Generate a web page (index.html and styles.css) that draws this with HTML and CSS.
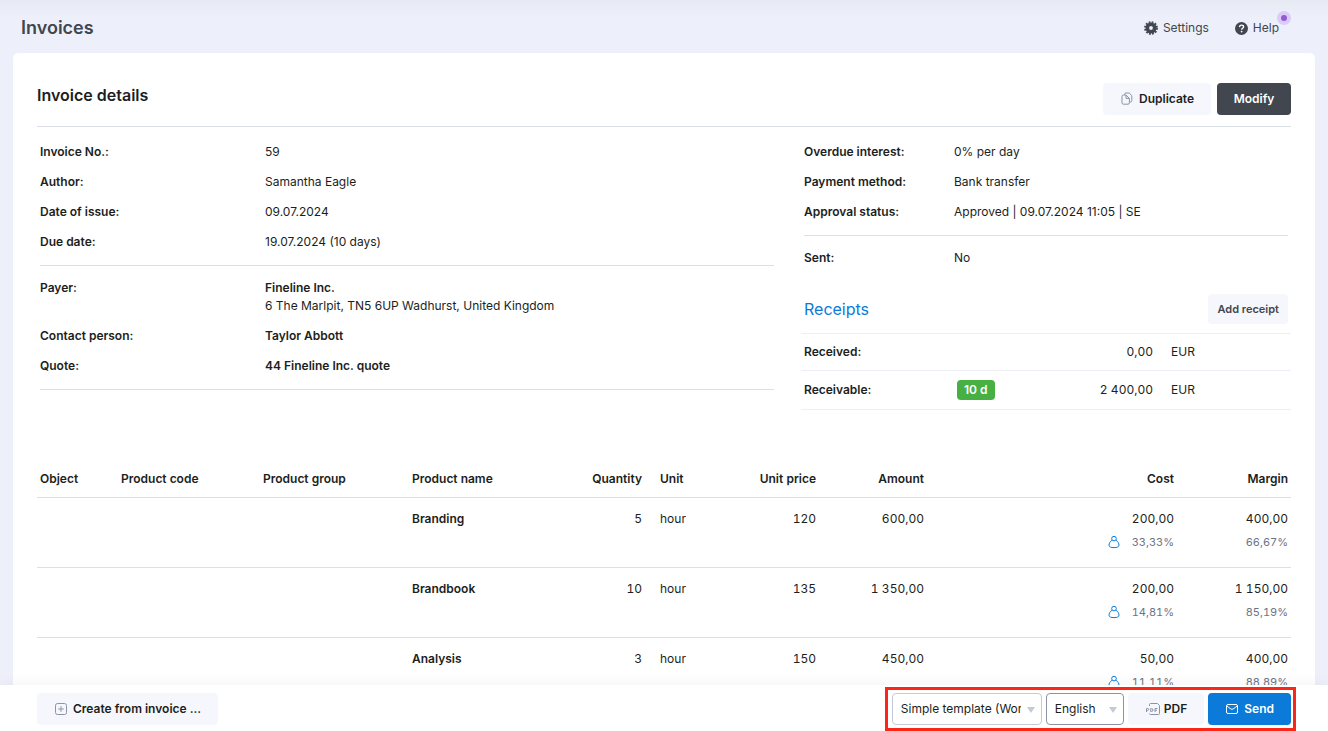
FILE: index.html
```html
<!DOCTYPE html>
<html lang="en">
<head>
    <meta charset="UTF-8">
    <meta name="viewport" content="width=device-width, initial-scale=1.0">
    <title>Invoices</title>
    <link rel="stylesheet" href="styles.css">
</head>
<body>
    <header class="page-header">
        <h1>Invoices</h1>
        <nav class="header-links">
            <a href="#">
                <svg width="14" height="14" viewBox="0 0 14 14">
                    <circle cx="7" cy="7" r="3.7" fill="none" stroke="currentColor" stroke-width="3.6"/>
                    <circle cx="7" cy="7" r="6" fill="none" stroke="currentColor" stroke-width="1.8" stroke-dasharray="1.8 1.34"/>
                </svg>
                Settings
            </a>
            <a href="#" class="help-link">
                <svg width="13" height="13" viewBox="0 0 13 13">
                    <circle cx="6.5" cy="6.5" r="6.5" fill="currentColor"/>
                    <path d="M4.5 5.1C4.6 3.8 5.4 3.1 6.5 3.1C7.7 3.1 8.6 3.8 8.6 4.8C8.6 6.2 6.6 6.2 6.6 7.7" fill="none" stroke="#fff" stroke-width="1.4"/>
                    <circle cx="6.6" cy="9.6" r="0.9" fill="#fff"/>
                </svg>
                Help
                <span class="help-dot"></span>
            </a>
        </nav>
    </header>

    <main class="card">
        <div class="card-header">
            <h2>Invoice details</h2>
            <div class="card-actions">
                <button type="button" class="btn btn-duplicate">
                    <svg width="12" height="13" viewBox="0 0 12 13" fill="none" stroke="#8a94a6">
                        <path d="M3.5 2.5Q3.5 1 5 1H8.2L10.8 3.6V8.5Q10.8 10 9.3 10H8.6"/>
                        <path d="M5 3H2.5Q1 3 1 4.4V10.8Q1 12.2 2.5 12.2H7Q8.4 12.2 8.4 10.8V6.4L5 3V6.4H8.4"/>
                    </svg>
                    Duplicate
                </button>
                <button type="button" class="btn btn-dark">Modify</button>
            </div>
        </div>

        <div class="details">
            <div class="details-left">
                <dl class="info">
                    <dt>Invoice No.:</dt><dd>59</dd>
                    <dt>Author:</dt><dd>Samantha Eagle</dd>
                    <dt>Date of issue:</dt><dd>09.07.2024</dd>
                    <dt>Due date:</dt><dd>19.07.2024 (10 days)</dd>
                </dl>
                <dl class="info">
                    <dt>Payer:</dt><dd><strong>Fineline Inc.</strong><br>6 The Marlpit, TN5 6UP Wadhurst, United Kingdom</dd>
                    <dt>Contact person:</dt><dd><strong>Taylor Abbott</strong></dd>
                    <dt>Quote:</dt><dd><strong>44 Fineline Inc. quote</strong></dd>
                </dl>
            </div>
            <div class="details-right">
                <dl class="info">
                    <dt>Overdue interest:</dt><dd>0% per day</dd>
                    <dt>Payment method:</dt><dd>Bank transfer</dd>
                    <dt>Approval status:</dt><dd>Approved | 09.07.2024 11:05 | SE</dd>
                </dl>
                <dl class="info info-last">
                    <dt>Sent:</dt><dd>No</dd>
                </dl>
                <div class="receipts-header">
                    <h3>Receipts</h3>
                    <button type="button" class="btn btn-small">Add receipt</button>
                </div>
                <table class="receipts">
                    <tr>
                        <th scope="row">Received:</th>
                        <td></td>
                        <td class="num">0,00</td>
                        <td class="currency">EUR</td>
                    </tr>
                    <tr>
                        <th scope="row">Receivable:</th>
                        <td><span class="badge">10 d</span></td>
                        <td class="num">2 400,00</td>
                        <td class="currency">EUR</td>
                    </tr>
                </table>
            </div>
        </div>

        <table class="products">
            <thead>
                <tr>
                    <th class="col-object">Object</th>
                    <th class="col-code">Product code</th>
                    <th class="col-group">Product group</th>
                    <th>Product name</th>
                    <th class="col-quantity num">Quantity</th>
                    <th class="col-unit">Unit</th>
                    <th class="col-price num">Unit price</th>
                    <th class="col-amount num">Amount</th>
                    <th class="col-cost num">Cost</th>
                    <th class="col-margin num">Margin</th>
                </tr>
            </thead>
            <tbody>
                <tr>
                    <td></td>
                    <td></td>
                    <td></td>
                    <td><strong>Branding</strong></td>
                    <td class="num">5</td>
                    <td class="col-unit">hour</td>
                    <td class="num">120</td>
                    <td class="num">600,00</td>
                    <td class="num">200,00
                        <div class="percent">
                            <svg class="person" width="12" height="14" viewBox="0 0 12 14"><circle cx="6" cy="3.6" r="2.3"/><path d="M3.9 5.3C2 6.6 1 8.5 1 10.2C1 12 3 12.6 6 12.6S11 12 11 10.2C11 8.5 10 6.6 8.1 5.3"/></svg>
                            33,33%
                        </div>
                    </td>
                    <td class="num">400,00<div class="percent">66,67%</div></td>
                </tr>
                <tr>
                    <td></td>
                    <td></td>
                    <td></td>
                    <td><strong>Brandbook</strong></td>
                    <td class="num">10</td>
                    <td class="col-unit">hour</td>
                    <td class="num">135</td>
                    <td class="num">1 350,00</td>
                    <td class="num">200,00
                        <div class="percent">
                            <svg class="person" width="12" height="14" viewBox="0 0 12 14"><circle cx="6" cy="3.6" r="2.3"/><path d="M3.9 5.3C2 6.6 1 8.5 1 10.2C1 12 3 12.6 6 12.6S11 12 11 10.2C11 8.5 10 6.6 8.1 5.3"/></svg>
                            14,81%
                        </div>
                    </td>
                    <td class="num">1 150,00<div class="percent">85,19%</div></td>
                </tr>
                <tr>
                    <td></td>
                    <td></td>
                    <td></td>
                    <td><strong>Analysis</strong></td>
                    <td class="num">3</td>
                    <td class="col-unit">hour</td>
                    <td class="num">150</td>
                    <td class="num">450,00</td>
                    <td class="num">50,00
                        <div class="percent">
                            <svg class="person" width="12" height="14" viewBox="0 0 12 14"><circle cx="6" cy="3.6" r="2.3"/><path d="M3.9 5.3C2 6.6 1 8.5 1 10.2C1 12 3 12.6 6 12.6S11 12 11 10.2C11 8.5 10 6.6 8.1 5.3"/></svg>
                            11,11%
                        </div>
                    </td>
                    <td class="num">400,00<div class="percent">88,89%</div></td>
                </tr>
            </tbody>
        </table>
    </main>

    <footer class="toolbar">
        <button type="button" class="btn btn-create">
            <svg width="12" height="12" viewBox="0 0 12 12" fill="none" stroke="#8a94a6">
                <rect x="0.5" y="0.5" width="11" height="11" rx="2"/>
                <path d="M6 3.2V8.8M3.2 6H8.8"/>
            </svg>
            Create from invoice ...
        </button>
        <div class="send-group">
            <div class="select-wrap select-template">
                <select aria-label="Template">
                    <option>Simple template (Word)</option>
                </select>
            </div>
            <div class="select-wrap select-language">
                <select aria-label="Language">
                    <option>English</option>
                </select>
            </div>
            <button type="button" class="btn btn-pdf">
                <svg width="14" height="12" viewBox="0 0 14 12" fill="none" stroke="#8a94a6">
                    <path d="M3.5 3V1.5Q3.5 0.5 4.5 0.5H11.5L13.5 2.5V10.5Q13.5 11.5 12.5 11.5H4.5Q3.5 11.5 3.5 10.5"/>
                    <path d="M0.5 9V5.5H1.6Q2.7 5.5 2.7 6.4T1.6 7.4H0.5M4.7 5.5V8.5H5.4Q7 8.5 7 7T5.4 5.5ZM9 9V5.5H11.4M9 7.3H11"/>
                </svg>
                PDF
            </button>
            <button type="submit" class="btn btn-send">
                <svg width="12" height="10" viewBox="0 0 12 10" fill="none" stroke="#fff">
                    <rect x="0.5" y="0.5" width="11" height="9" rx="1.5"/>
                    <path d="M1 2.2L5 5Q6 5.7 7 5L11 2.2"/>
                </svg>
                Send
            </button>
        </div>
    </footer>
</body>
</html>
```
FILE: styles.css
```css
* {
    box-sizing: border-box;
}

body {
    font-family: Inter, "Liberation Sans", sans-serif;
    font-size: 12px;
    line-height: 18px;
    color: #1c1e21;
    background: linear-gradient(#e7eaf3, #edf0fa 18px);
    margin: 0;
    height: 100vh;
    display: flex;
    flex-direction: column;
}

h1, h2, h3, dl, dd {
    margin: 0;
}

strong, dt, th {
    font-weight: 600;
}

.page-header {
    flex: none;
    display: flex;
    justify-content: space-between;
    align-items: center;
    padding: 16px 49px 13px 21px;
}

.page-header h1 {
    font-size: 18px;
    line-height: 24px;
    font-weight: 600;
    color: #42464e;
}

.header-links {
    display: flex;
    gap: 26px;
}

.header-links a {
    display: flex;
    align-items: center;
    gap: 5px;
    color: #42464e;
    text-decoration: none;
}

.help-link {
    position: relative;
}

.help-dot {
    position: absolute;
    top: -8px;
    right: -12px;
    width: 14px;
    height: 14px;
    border: 4px solid #dccbf6;
    border-radius: 50%;
    background-color: #8f5bd6;
}

.card {
    flex: 1;
    min-height: 0;
    overflow: hidden;
    margin: 0 13px;
    padding: 30px 24px 0;
    background-color: #fff;
    border-radius: 5px 5px 0 0;
}

.card-header {
    display: flex;
    justify-content: space-between;
    padding-bottom: 11px;
    border-bottom: 1px solid #dbdfe8;
}

.card-header h2 {
    font-size: 16px;
    line-height: 24px;
    font-weight: 600;
}

.card-actions {
    display: flex;
    gap: 6px;
}

.btn {
    display: flex;
    align-items: center;
    justify-content: center;
    gap: 6px;
    height: 32px;
    padding: 0 17px 1px 18px;
    border: none;
    border-radius: 4px;
    background-color: #f6f7fc;
    color: #1c1e21;
    font-family: inherit;
    font-size: 12px;
    font-weight: 600;
    cursor: pointer;
}

.btn-dark {
    min-width: 74px;
    padding: 0 16px 1px;
    background-color: #42464e;
    color: #fff;
}

.btn-small {
    height: 30px;
    padding: 0 9px;
    font-size: 11px;
    color: #42464e;
}

.details {
    display: grid;
    grid-template-columns: 1fr 484px;
    gap: 30px;
    padding: 10px 3px 0;
}

.info {
    display: grid;
    grid-template-columns: 225px 1fr;
    padding-bottom: 8px;
    margin-bottom: 7px;
    border-bottom: 1px solid #dbdfe8;
}

.details-right .info {
    grid-template-columns: 150px 1fr;
}

.details-right .info-last {
    border: none;
    margin-bottom: 13px;
}

.info dt,
.info dd {
    padding: 6px 0;
}

.receipts-header {
    display: flex;
    justify-content: space-between;
    align-items: center;
    padding-bottom: 9px;
}

.receipts-header h3 {
    font-size: 16px;
    font-weight: 400;
    color: #0b7ad9;
}

table {
    border-collapse: collapse;
    table-layout: fixed;
}

th {
    text-align: left;
}

.num,
th.num {
    text-align: right;
}

.num {
    font-variant-numeric: tabular-nums;
}

.receipts {
    width: calc(100% + 6px);
    margin: 0 -3px;
    border-top: 1px solid #edeff6;
}

.receipts th,
.receipts td {
    padding: 9px 3px;
    border-bottom: 1px solid #edeff6;
}

.receipts th {
    width: 153px;
}

.receipts .currency {
    width: 135px;
    padding-left: 15px;
}

.badge {
    display: inline-block;
    padding: 1px 7px;
    border-radius: 4px;
    background-color: #47b043;
    color: #fff;
    font-weight: 600;
}

.products {
    width: 100%;
    margin-top: 48px;
}

.products th,
.products td {
    padding: 12px 3px 9px;
    vertical-align: top;
    border-bottom: 1px solid #dbdfe8;
}

.products td {
    height: 70px;
}

.col-object { width: 81px; }
.col-code { width: 142px; }
.col-group { width: 149px; }
.col-quantity { width: 85px; }
.col-unit { width: 60px; }
.col-price { width: 114px; }
.col-amount { width: 108px; }
.col-cost { width: 250px; }
.col-margin { width: 114px; }

.products .col-unit {
    padding-left: 15px;
}

.percent {
    display: flex;
    justify-content: flex-end;
    align-items: center;
    gap: 12px;
    margin-top: 5px;
    font-size: 11px;
    color: #6b7486;
}

.person {
    fill: none;
    stroke: #0b7ad9;
}

/* Bottom toolbar */
.toolbar {
    flex: none;
    position: relative;
    display: flex;
    justify-content: space-between;
    align-items: center;
    padding: 2px 32px 0 37px;
    background-color: #fff;
    box-shadow: 0 0 14px rgba(0, 0, 0, 0.06);
}

.send-group {
    display: flex;
    gap: 4px;
    padding: 3px 2px 3px 4px;
    border: 3px solid #fb2618;
}

.select-wrap {
    position: relative;
}

.select-wrap::after {
    content: "";
    position: absolute;
    top: 14px;
    right: 7px;
    border: 4px solid transparent;
    border-top: 6px solid #c3cad8;
    border-bottom: none;
    pointer-events: none;
}

.select-wrap select {
    appearance: none;
    width: 100%;
    height: 32px;
    padding: 0 20px 1px 8px;
    border: 1px solid #c3cad8;
    border-radius: 4px;
    background-color: #fff;
    color: #1c1e21;
    font-family: inherit;
    font-size: 12px;
}

.select-template {
    width: 150px;
}

.select-language {
    width: 78px;
}

.select-language select {
    border-color: #8a94a6;
}

.btn-pdf {
    gap: 4px;
}

.btn-send {
    background-color: #0b7ad9;
    color: #fff;
}
```
